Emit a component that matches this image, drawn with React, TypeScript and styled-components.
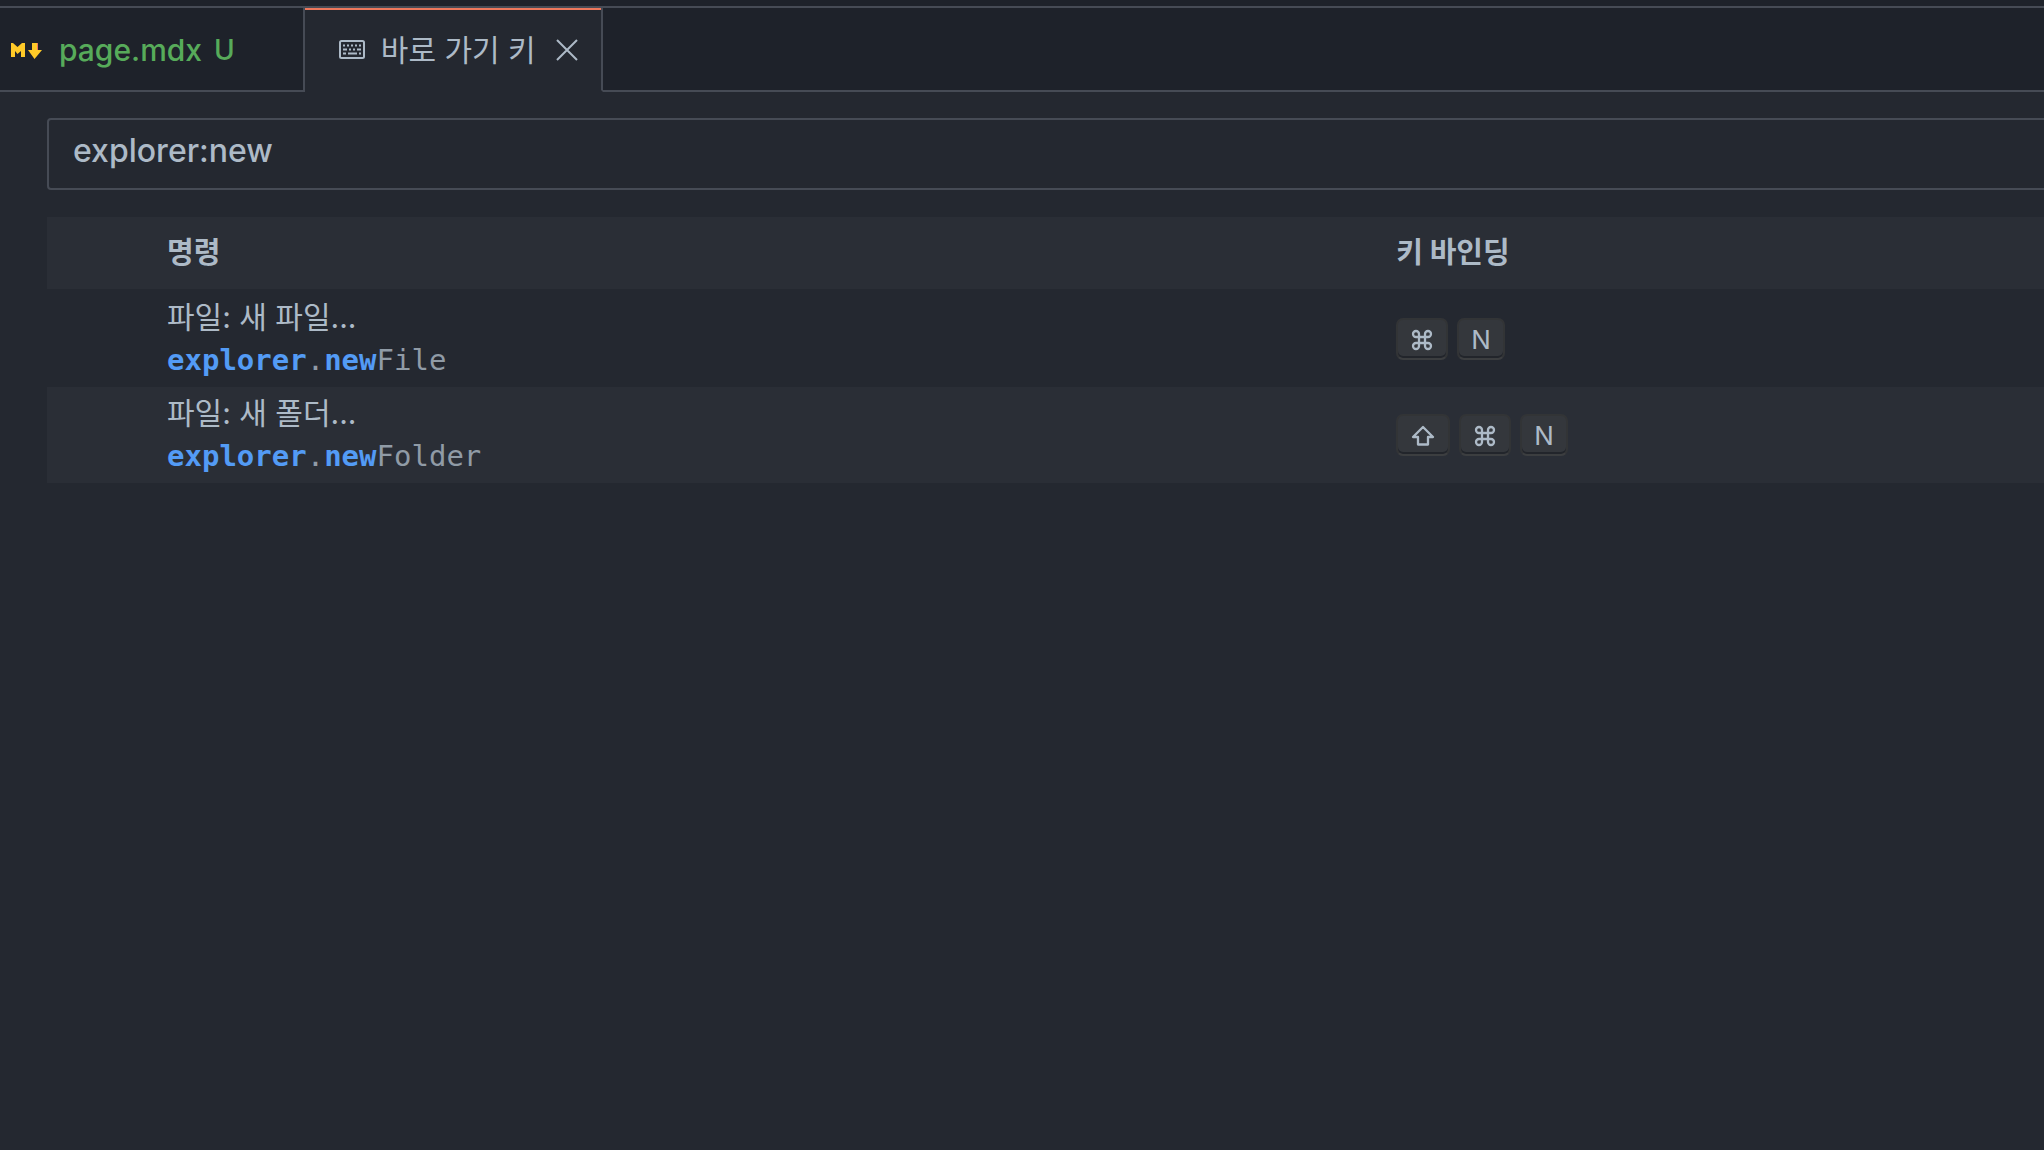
import React, { useState } from "react";
import styled, { createGlobalStyle } from "styled-components";

const color = {
  editor: "#242830",
  bar: "#1e222a",
  line: "#464b55",
  stripe: "#2a2e36",
  text: "#adbac7",
  muted: "#909ba6",
  match: "#539bf5",
  added: "#57ab5a",
  accent: "#ec775c",
};

const sans = `Inter, "Noto Sans CJK KR", sans-serif`;

const GlobalStyle = createGlobalStyle`
  * { box-sizing: border-box; }
  body {
    margin: 0;
    background: ${color.editor};
    color: ${color.text};
    font-family: ${sans};
    overflow-x: hidden;
  }
`;

const Editor = styled.main`
  min-height: 100vh;
  overflow: hidden;
  background: ${color.editor};
`;

const TabBar = styled.nav`
  display: flex;
  height: 92px;
  padding-top: 6px;
  background: ${color.bar};
`;

const Tab = styled.div<{ $active?: boolean }>`
  display: flex;
  align-items: center;
  padding: ${(p) => (p.$active ? "2px 23px 0 34px" : "2px 68px 0 9px")};
  border-top: 2px solid ${color.line};
  border-right: 2px solid ${color.line};
  border-bottom: 2px solid ${(p) => (p.$active ? color.editor : color.line)};
  background: ${(p) => (p.$active ? color.editor : color.bar)};
  box-shadow: ${(p) => (p.$active ? `inset 0 2px 0 ${color.accent}` : "none")};
`;

const TabRest = styled.div`
  flex: 1;
  border-top: 2px solid ${color.line};
  border-bottom: 2px solid ${color.line};
`;

const TabLabel = styled.button<{ $added?: boolean }>`
  display: flex;
  align-items: center;
  gap: 16px;
  padding: 0;
  border: 0;
  background: none;
  color: ${(p) => (p.$added ? color.added : color.text)};
  font-family: ${sans};
  font-size: 30px;
  font-weight: ${(p) => (p.$added ? 500 : 400)};
  line-height: 40px;
  white-space: nowrap;
`;

const FileName = styled.span`
  display: flex;
  gap: 12px;
`;

const GitStatus = styled.span`
  font-size: 28px;
`;

const CloseButton = styled.button`
  display: flex;
  margin-left: 20px;
  padding: 0;
  border: 0;
  background: none;
  color: ${color.text};
`;

const Content = styled.section`
  margin-right: -18px;
  padding: 26px 0 0 47px;
`;

const SearchBox = styled.input`
  display: block;
  width: 100%;
  height: 72px;
  padding: 0 24px 8px;
  border: 2px solid ${color.line};
  border-radius: 4px;
  outline: none;
  background: ${color.editor};
  color: ${color.text};
  font-family: ${sans};
  font-size: 32px;
  font-weight: 500;
`;

const Table = styled.table`
  width: 100%;
  margin-top: 27px;
  border-collapse: collapse;
  table-layout: fixed;
`;

const ActionCol = styled.col`
  width: 120px;
`;

const CommandCol = styled.col`
  width: 61%;
`;

const HeadRow = styled.tr`
  height: 72px;
  background: ${color.stripe};
`;

const HeadCell = styled.th`
  padding: 0;
  font-size: 29px;
  line-height: 44px;
  font-weight: 700;
  text-align: left;
`;

const Cell = styled.td`
  padding: 0;
  vertical-align: middle;
`;

const Row = styled.tr<{ $striped?: boolean }>`
  height: ${(p) => (p.$striped ? "96px" : "98px")};
  background: ${(p) => (p.$striped ? color.stripe : color.editor)};

  ${Cell} {
    padding-top: ${(p) => (p.$striped ? "0" : "2px")};
  }
`;

const CommandName = styled.div`
  font-size: 30px;
  line-height: 43px;
`;

const CommandId = styled.code`
  display: block;
  color: ${color.muted};
  font-family: "DejaVu Sans Mono", monospace;
  font-size: 29px;
  line-height: 43px;
`;

const Match = styled.strong`
  color: ${color.match};
  font-weight: 700;
`;

const Keys = styled.div`
  display: flex;
  gap: 9px;
`;

const Key = styled.kbd`
  display: flex;
  align-items: center;
  height: 42px;
  padding: 2px 12px 0;
  border: 2px solid rgba(51, 51, 51, 0.6);
  border-bottom-color: rgba(68, 68, 68, 0.6);
  border-radius: 7px;
  background: #34373c;
  box-shadow: inset 0 -2px 0 #22252b;
  font-family: ${sans};
  font-size: 26px;
  line-height: 36px;
`;

const MarkdownIcon = () => (
  <svg width="34" height="20" viewBox="0 0 34 20" aria-hidden="true">
    <path fill="#ec775c" d="M12 9h3v8h-3zM27 3h2v7h-2z" />
    <path fill="#ffca28" d="M2 3h2l4.500 4L13 3h3v14h-4v-6l-3.500 3L6 11v6H2z" />
    <path fill="#ffca28" d="M23 3h5v7h5l-7.500 9L19 10h4z" />
  </svg>
);

const KeyboardIcon = () => (
  <svg width="26" height="20" viewBox="0 0 26 20" fill="none" stroke="currentColor" strokeWidth="2" aria-hidden="true">
    <rect x="1" y="1" width="24" height="17" rx="1.500" />
    <path d="M4 5.500h2M8 5.500h2M12 5.500h2M16 5.500h2M20 5.500h2M4 9.500h4M10 9.500h2M14 9.500h2M18 9.500h4M4 13.500h3M9 13.500h9M20 13.500h2" />
  </svg>
);

const CloseIcon = () => (
  <svg width="22" height="22" viewBox="0 0 22 22" fill="none" stroke="currentColor" strokeWidth="2" aria-hidden="true">
    <path d="M1 1l20 20M21 1L1 21" />
  </svg>
);

const CommandKeyIcon = () => (
  <svg width="24" height="24" viewBox="0 0 24 24" fill="none" stroke="currentColor" strokeWidth="2.300" role="img" aria-label="Command">
    <path d="M15 6v12a3 3 0 1 0 3-3H6a3 3 0 1 0 3 3V6a3 3 0 1 0-3 3h12a3 3 0 1 0-3-3" />
  </svg>
);

const ShiftKeyIcon = () => (
  <svg width="26" height="24" viewBox="0 0 26 24" fill="none" stroke="currentColor" strokeWidth="2.300" strokeLinejoin="round" role="img" aria-label="Shift">
    <path d="M13 3L3 13h5v7.500h10V13h5z" />
  </svg>
);

type KeyName = "cmd" | "shift" | "N";

const keyFace: Record<KeyName, React.ReactNode> = {
  cmd: <CommandKeyIcon />,
  shift: <ShiftKeyIcon />,
  N: "N",
};

const commands: { name: string; rest: string; keys: KeyName[] }[] = [
  { name: "파일: 새 파일...", rest: "File", keys: ["cmd", "N"] },
  { name: "파일: 새 폴더...", rest: "Folder", keys: ["shift", "cmd", "N"] },
];

export default function App() {
  const [query, setQuery] = useState("explorer:new");

  return (
    <Editor>
      <GlobalStyle />
      <TabBar>
        <Tab>
          <TabLabel $added>
            <MarkdownIcon />
            <FileName>
              page.mdx
              <GitStatus>U</GitStatus>
            </FileName>
          </TabLabel>
        </Tab>
        <Tab $active>
          <TabLabel>
            <KeyboardIcon />
            바로 가기 키
          </TabLabel>
          <CloseButton aria-label="닫기">
            <CloseIcon />
          </CloseButton>
        </Tab>
        <TabRest />
      </TabBar>
      <Content>
        <SearchBox
          aria-label="키 바인딩 검색"
          spellCheck={false}
          value={query}
          onChange={(e) => setQuery(e.target.value)}
        />
        <Table>
          <colgroup>
            <ActionCol />
            <CommandCol />
            <col />
          </colgroup>
          <thead>
            <HeadRow>
              <Cell />
              <HeadCell scope="col">명령</HeadCell>
              <HeadCell scope="col">키 바인딩</HeadCell>
            </HeadRow>
          </thead>
          <tbody>
            {commands.map((command, index) => (
              <Row key={command.rest} $striped={index % 2 === 1}>
                <Cell />
                <Cell>
                  <CommandName>{command.name}</CommandName>
                  <CommandId>
                    <Match>explorer</Match>.<Match>new</Match>
                    {command.rest}
                  </CommandId>
                </Cell>
                <Cell>
                  <Keys>
                    {command.keys.map((key) => (
                      <Key key={key}>{keyFace[key]}</Key>
                    ))}
                  </Keys>
                </Cell>
              </Row>
            ))}
          </tbody>
        </Table>
      </Content>
    </Editor>
  );
}
